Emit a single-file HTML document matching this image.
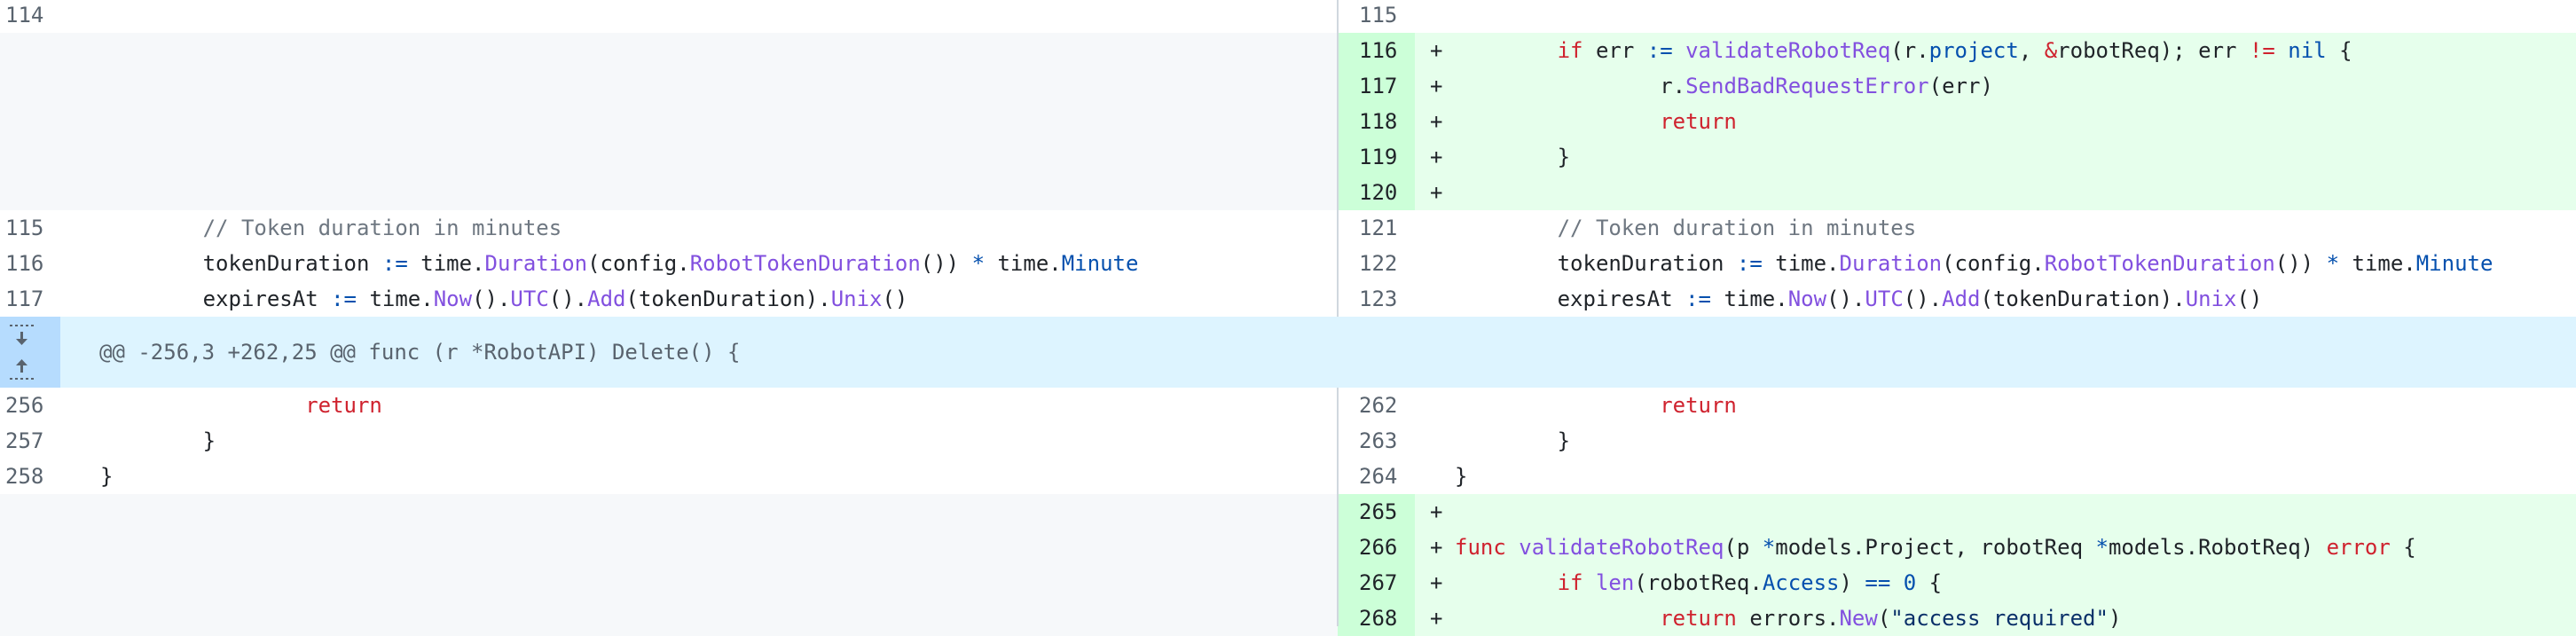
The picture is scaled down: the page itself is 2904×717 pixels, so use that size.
<!DOCTYPE html>
<html><head><meta charset="utf-8"><style>
*{margin:0;padding:0;box-sizing:border-box}
body{width:2904px;height:706px;overflow:hidden;background:#fff;font-family:"DejaVu Sans Mono","Liberation Mono",monospace;font-size:24px;color:#1f2328;position:relative}
.r{position:absolute;left:0;width:2904px;height:40px;line-height:40px;white-space:pre;tab-size:8;-moz-tab-size:8}
.c{position:absolute;top:0;height:40px}
.n{color:#59636e}
.na{color:#1f2328}
.k{color:#cf222e}.f{color:#8250df}.b{color:#0550ae}.cm{color:#6e7781}.s{color:#0a3069}
.div{position:absolute;left:1507px;top:0;width:2px;height:357px;background:#d0d7de}
.div2{position:absolute;left:1507px;top:437px;width:2px;height:269px;background:#d0d7de}
</style></head><body>

<div class="r" style="top:-3px">
<span class="c n" style="left:6px">114</span>
<span class="c n" style="left:1532px">115</span>
</div>

<div class="r" style="top:37px;height:200px">
<div class="c" style="left:0;width:1508px;height:200px;background:#f6f8fa"></div>
<div class="c" style="left:1508px;width:87px;height:200px;background:#ccffd8"></div>
<div class="c" style="left:1595px;width:1309px;height:200px;background:#e6ffec"></div>
</div>
<div class="r" style="top:37px"><span class="c na" style="left:1532px">116</span><span class="c" style="left:1612px">+</span><span class="c" style="left:1640px">	<span class="k">if</span> err <span class="b">:=</span> <span class="f">validateRobotReq</span>(r.<span class="b">project</span>, <span class="k">&amp;</span>robotReq); err <span class="k">!=</span> <span class="b">nil</span> {</span></div>
<div class="r" style="top:77px"><span class="c na" style="left:1532px">117</span><span class="c" style="left:1612px">+</span><span class="c" style="left:1640px">		r.<span class="f">SendBadRequestError</span>(err)</span></div>
<div class="r" style="top:117px"><span class="c na" style="left:1532px">118</span><span class="c" style="left:1612px">+</span><span class="c" style="left:1640px">		<span class="k">return</span></span></div>
<div class="r" style="top:157px"><span class="c na" style="left:1532px">119</span><span class="c" style="left:1612px">+</span><span class="c" style="left:1640px">	}</span></div>
<div class="r" style="top:197px"><span class="c na" style="left:1532px">120</span><span class="c" style="left:1612px">+</span></div>

<div class="r" style="top:237px"><span class="c n" style="left:6px">115</span><span class="c" style="left:113px">	<span class="cm">// Token duration in minutes</span></span><span class="c n" style="left:1532px">121</span><span class="c" style="left:1640px">	<span class="cm">// Token duration in minutes</span></span></div>
<div class="r" style="top:277px"><span class="c n" style="left:6px">116</span><span class="c" style="left:113px">	tokenDuration <span class="b">:=</span> time.<span class="f">Duration</span>(config.<span class="f">RobotTokenDuration</span>()) <span class="b">*</span> time.<span class="b">Minute</span></span><span class="c n" style="left:1532px">122</span><span class="c" style="left:1640px">	tokenDuration <span class="b">:=</span> time.<span class="f">Duration</span>(config.<span class="f">RobotTokenDuration</span>()) <span class="b">*</span> time.<span class="b">Minute</span></span></div>
<div class="r" style="top:317px"><span class="c n" style="left:6px">117</span><span class="c" style="left:113px">	expiresAt <span class="b">:=</span> time.<span class="f">Now</span>().<span class="f">UTC</span>().<span class="f">Add</span>(tokenDuration).<span class="f">Unix</span>()</span><span class="c n" style="left:1532px">123</span><span class="c" style="left:1640px">	expiresAt <span class="b">:=</span> time.<span class="f">Now</span>().<span class="f">UTC</span>().<span class="f">Add</span>(tokenDuration).<span class="f">Unix</span>()</span></div>

<div class="div"></div>
<div class="div2"></div>

<div class="r" style="top:357px;height:80px;background:#ddf4ff">
<div class="c" style="left:0;width:68px;height:80px;background:#b6dcfe"></div>
<svg style="position:absolute;left:10px;top:8px;width:30px;height:64px" width="30" height="64" viewBox="0 0 30 64">
<g fill="#59636e">
<rect x="1" y="1" width="3" height="2"/><rect x="7" y="1" width="3" height="2"/><rect x="13" y="1" width="3" height="2"/><rect x="19" y="1" width="3" height="2"/><rect x="25" y="1" width="3" height="2"/>
<rect x="13" y="9" width="3" height="10"/><path d="M8 17 L21 17 L14.5 24 Z"/>
<rect x="13" y="45" width="3" height="10"/><path d="M8 47 L21 47 L14.5 40 Z"/>
<rect x="1" y="61" width="3" height="2"/><rect x="7" y="61" width="3" height="2"/><rect x="13" y="61" width="3" height="2"/><rect x="19" y="61" width="3" height="2"/><rect x="25" y="61" width="3" height="2"/>
</g></svg>
<span class="c" style="left:112px;line-height:80px;height:80px;color:#59636e">@@ -256,3 +262,25 @@ func (r *RobotAPI) Delete() {</span>
</div>

<div class="r" style="top:437px"><span class="c n" style="left:6px">256</span><span class="c" style="left:113px">		<span class="k">return</span></span><span class="c n" style="left:1532px">262</span><span class="c" style="left:1640px">		<span class="k">return</span></span></div>
<div class="r" style="top:477px"><span class="c n" style="left:6px">257</span><span class="c" style="left:113px">	}</span><span class="c n" style="left:1532px">263</span><span class="c" style="left:1640px">	}</span></div>
<div class="r" style="top:517px"><span class="c n" style="left:6px">258</span><span class="c" style="left:113px">}</span><span class="c n" style="left:1532px">264</span><span class="c" style="left:1640px">}</span></div>

<div class="r" style="top:557px;height:160px">
<div class="c" style="left:0;width:1508px;height:160px;background:#f6f8fa"></div>
<div class="c" style="left:1508px;width:87px;height:160px;background:#ccffd8"></div>
<div class="c" style="left:1595px;width:1309px;height:160px;background:#e6ffec"></div>
</div>
<div class="div2" style="top:557px;height:149px"></div>
<div class="r" style="top:557px"><span class="c na" style="left:1532px">265</span><span class="c" style="left:1612px">+</span></div>
<div class="r" style="top:597px"><span class="c na" style="left:1532px">266</span><span class="c" style="left:1612px">+</span><span class="c" style="left:1640px"><span class="k">func</span> <span class="f">validateRobotReq</span>(p <span class="b">*</span>models.Project, robotReq <span class="b">*</span>models.RobotReq) <span class="k">error</span> {</span></div>
<div class="r" style="top:637px"><span class="c na" style="left:1532px">267</span><span class="c" style="left:1612px">+</span><span class="c" style="left:1640px">	<span class="k">if</span> <span class="f">len</span>(robotReq.<span class="b">Access</span>) <span class="b">==</span> <span class="b">0</span> {</span></div>
<div class="r" style="top:677px"><span class="c na" style="left:1532px">268</span><span class="c" style="left:1612px">+</span><span class="c" style="left:1640px">		<span class="k">return</span> errors.<span class="f">New</span>(<span class="s">"access required"</span>)</span></div>
</body></html>
